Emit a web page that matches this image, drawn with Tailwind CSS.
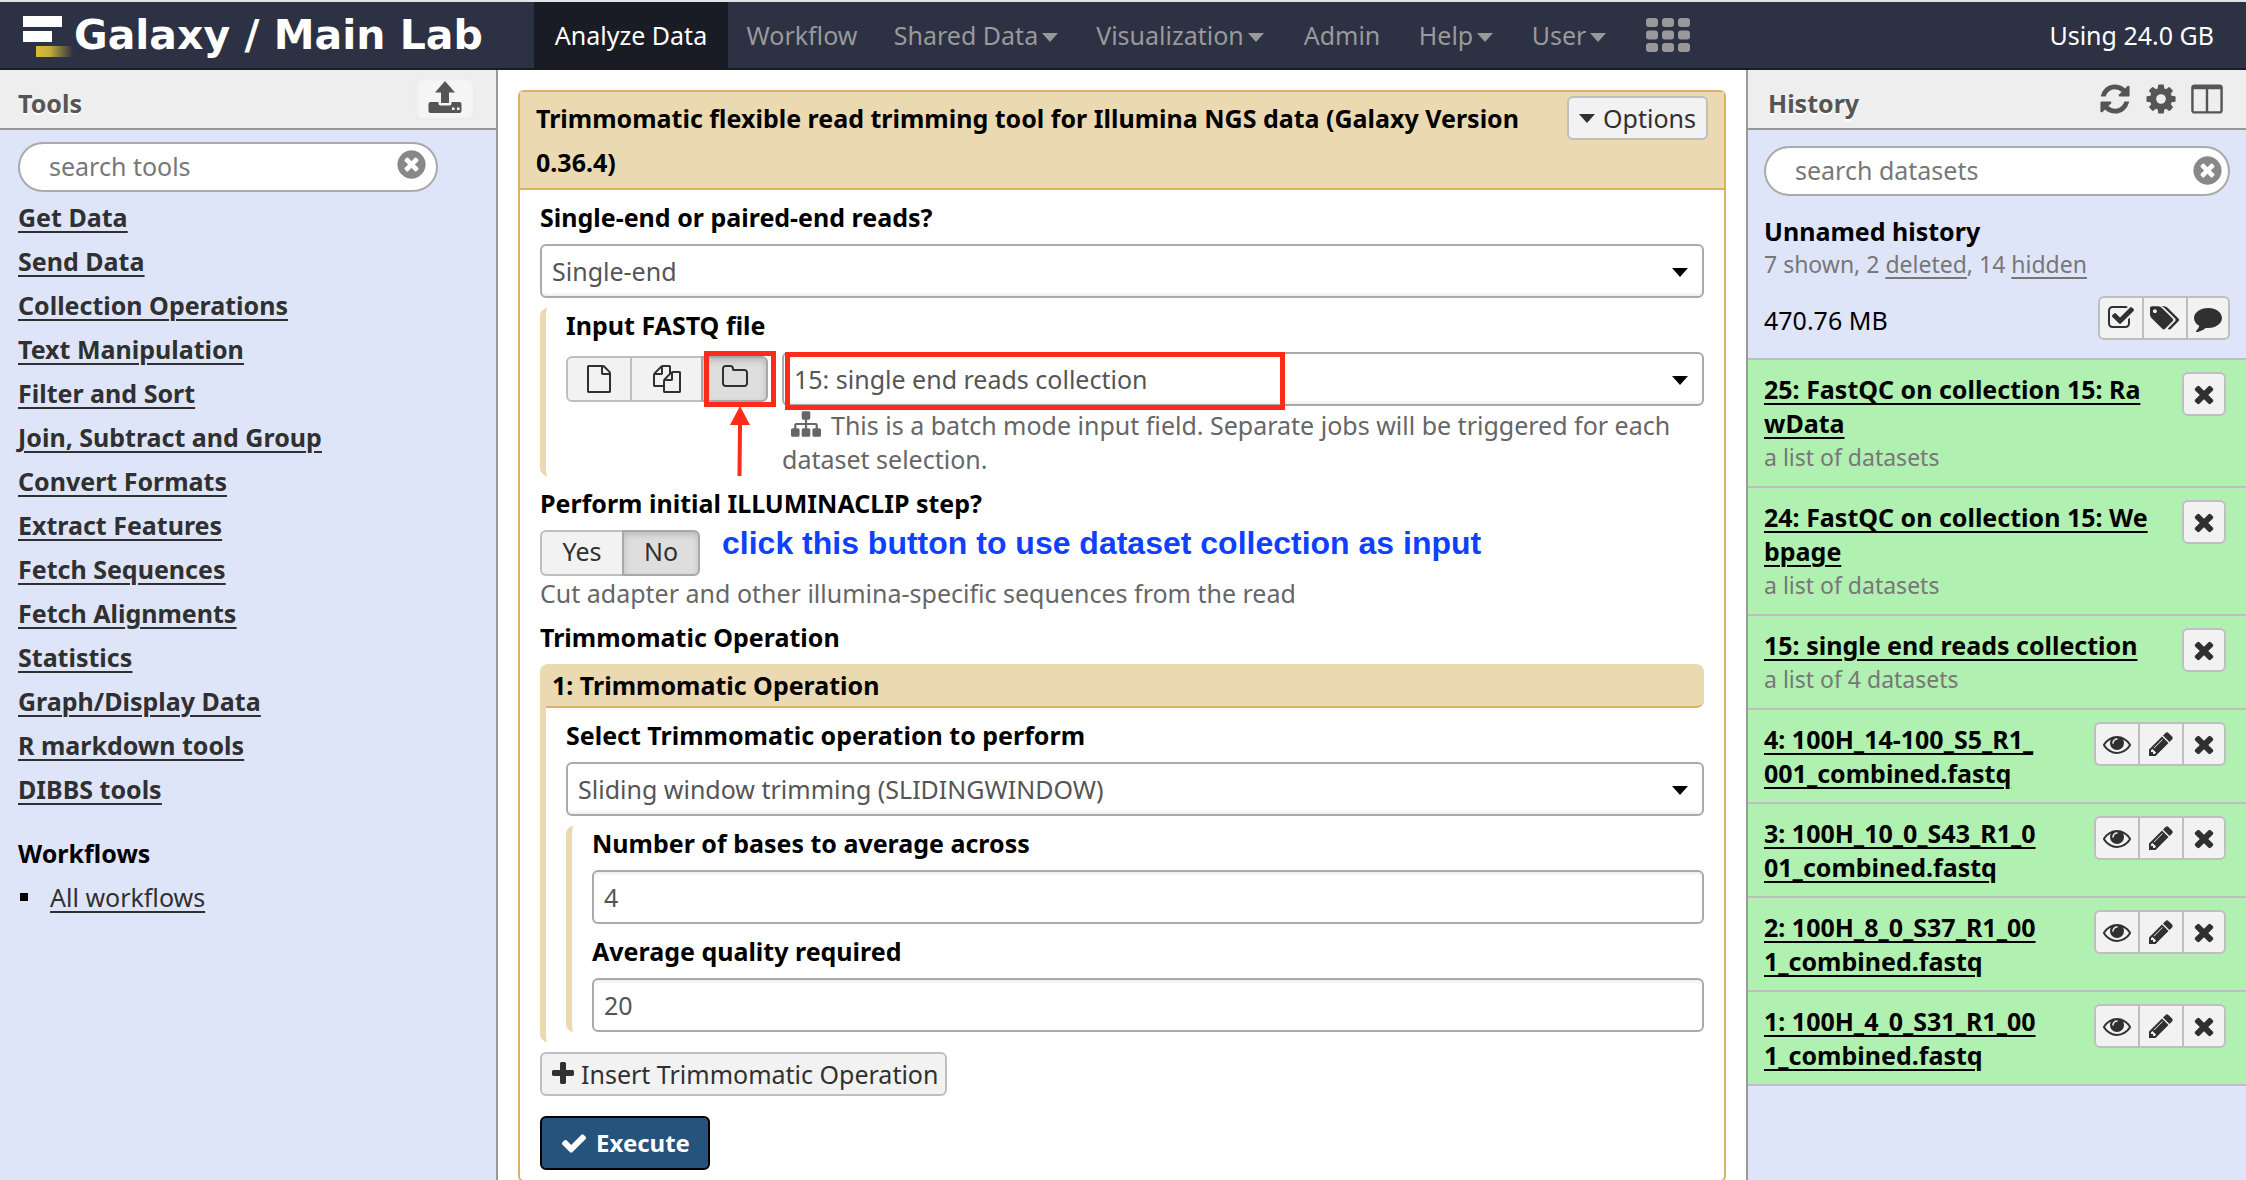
<!DOCTYPE html>
<html lang="en">
<head>
<meta charset="utf-8">
<meta name="viewport" content="width=device-width, initial-scale=1">
<title>Galaxy / Main Lab</title>
<script src="https://cdn.jsdelivr.net/npm/@tailwindcss/browser@4"></script>
</head>
<body class="flex h-screen flex-col overflow-hidden bg-white font-['Noto_Sans',sans-serif] text-[25px] leading-[34px] text-black">

<svg class="hidden" aria-hidden="true">
  <symbol id="i-times" viewBox="0 0 1792 1792"><path d="M1490 1322q0 40-28 68l-136 136q-28 28-68 28t-68-28l-294-294-294 294q-28 28-68 28t-68-28l-136-136q-28-28-28-68t28-68l294-294-294-294q-28-28-28-68t28-68l136-136q28-28 68-28t68 28l294 294 294-294q28-28 68-28t68 28l136 136q28 28 28 68t-28 68l-294 294 294 294q28 28 28 68z"/></symbol>
  <symbol id="i-clear" viewBox="0 0 1792 1792"><path d="M1277 1122q0-26-19-45l-181-181 181-181q19-19 19-45 0-27-19-46l-90-90q-19-19-46-19-26 0-45 19l-181 181-181-181q-19-19-45-19-27 0-46 19l-90 90q-19 19-19 46 0 26 19 45l181 181-181 181q-19 19-19 45 0 27 19 46l90 90q19 19 46 19 26 0 45-19l181-181 181 181q19 19 45 19 27 0 46-19l90-90q19-19 19-46zm387-226q0 209-103 385.500t-279.500 279.500-385.500 103-385.500-103-279.500-279.500-103-385.500 103-385.500 279.500-279.500 385.500-103 385.500 103 279.500 279.500 103 385.500z"/></symbol>
  <symbol id="i-pencil" viewBox="0 0 1792 1792"><path d="M491 1536l91-91-235-235-91 91v107h128v128h107zm523-928q0-22-22-22-10 0-17 7l-542 542q-7 7-7 17 0 22 22 22 10 0 17-7l542-542q7-7 7-17zm-54-192l416 416-832 832h-416v-416zm683 96q0 53-37 90l-166 166-416-416 166-165q36-38 90-38 53 0 91 38l235 234q37 39 37 91z"/></symbol>
  <symbol id="i-eye" viewBox="0 0 1792 1792"><path d="M1664 960q-152-236-381-353 61 104 61 225 0 185-131.500 316.500t-316.500 131.500-316.500-131.500-131.500-316.500q0-121 61-225-229 117-381 353 133 205 333.500 326.500t434.500 121.500 434.500-121.500 333.500-326.500zm-720-384q0-20-14-34t-34-14q-125 0-214.500 89.500t-89.500 214.500q0 20 14 34t34 14 34-14 14-34q0-86 61-147t147-61q20 0 34-14t14-34zm848 384q0 34-20 69-140 230-376.500 368.500t-499.500 138.500-499.500-139-376.500-368q-20-35-20-69t20-69q140-229 376.500-368t499.500-139 499.500 139 376.500 368q20 35 20 69z"/></symbol>
  <symbol id="i-plus" viewBox="0 0 1792 1792"><path d="M1600 736v192q0 40-28 68t-68 28h-416v416q0 40-28 68t-68 28h-192q-40 0-68-28t-28-68v-416h-416q-40 0-68-28t-28-68v-192q0-40 28-68t68-28h416v-416q0-40 28-68t68-28h192q40 0 68 28t28 68v416h416q40 0 68 28t28 68z"/></symbol>
  <symbol id="i-check" viewBox="0 0 1792 1792"><path d="M1671 566q0 40-28 68l-724 724-136 136q-28 28-68 28t-68-28l-136-136-362-362q-28-28-28-68t28-68l136-136q28-28 68-28t68 28l294 295 656-657q28-28 68-28t68 28l136 136q28 28 28 68z"/></symbol>
  <symbol id="i-cog" viewBox="0 0 1792 1792"><path d="M1152 896q0-106-75-181t-181-75-181 75-75 181 75 181 181 75 181-75 75-181zm512-109v222q0 12-8 23t-20 13l-185 28q-19 54-39 91 35 50 107 138 10 12 10 25t-9 23q-27 37-99 108t-94 71q-12 0-26-9l-138-108q-44 23-91 38-16 136-29 186-7 28-36 28h-222q-14 0-24.500-8.500t-11.500-21.500l-28-184q-49-16-90-37l-141 107q-10 9-25 9-14 0-25-11-126-114-165-168-7-10-7-23 0-12 8-23 15-21 51-66.500t54-70.500q-27-50-41-99l-183-27q-13-2-21-12.500t-8-23.500v-222q0-12 8-23t19-13l186-28q14-46 39-92-40-57-107-138-10-12-10-24 0-10 9-23 26-36 98.500-107.500t94.500-71.500q13 0 26 10l138 107q44-23 91-38 16-136 29-186 7-28 36-28h222q14 0 24.500 8.500t11.500 21.500l28 184q49 16 90 37l142-107q9-9 24-9 13 0 25 10 129 119 165 170 7 8 7 22 0 12-8 23-15 21-51 66.500t-54 70.500q26 50 41 98l183 28q13 2 21 12.500t8 23.500z"/></symbol>
  <symbol id="i-refresh" viewBox="0 0 1792 1792"><path d="M1639 1056q0 5-1 7-64 268-268 434.500t-478 166.500q-146 0-282.500-55t-243.500-157l-129 129q-19 19-45 19t-45-19-19-45v-448q0-26 19-45t45-19h448q26 0 45 19t19 45-19 45l-137 137q71 66 161 102t187 36q134 0 250-65t186-179q11-17 53-117 8-23 30-23h192q13 0 22.500 9.500t9.500 22.500zm25-800v448q0 26-19 45t-45 19h-448q-26 0-45-19t-19-45 19-45l138-138q-148-137-349-137-134 0-250 65t-186 179q-11 17-53 117-8 23-30 23h-199q-13 0-22.500-9.500t-9.500-22.500v-7q65-268 270-434.500t480-166.500q146 0 284 55.500t245 156.500l130-129q19-19 45-19t45 19 19 45z"/></symbol>
  <symbol id="i-columns" viewBox="0 0 1792 1792"><path d="M224 1536h608v-1152h-640v1120q0 13 9.500 22.500t22.500 9.500zm1376-32v-1120h-640v1152h608q13 0 22.500-9.500t9.500-22.500zm128-1216v1216q0 66-47 113t-113 47h-1344q-66 0-113-47t-47-113v-1216q0-66 47-113t113-47h1344q66 0 113 47t47 113z"/></symbol>
  <symbol id="i-folder" viewBox="0 0 1792 1792"><path d="M1600 1312v-704q0-40-28-68t-68-28h-704q-40 0-68-28t-28-68v-64q0-40-28-68t-68-28h-320q-40 0-68 28t-28 68v960q0 40 28 68t68 28h1216q40 0 68-28t28-68zm128-704v704q0 92-66 158t-158 66h-1216q-92 0-158-66t-66-158v-960q0-92 66-158t158-66h320q92 0 158 66t66 158v32h672q92 0 158 66t66 158z"/></symbol>
  <symbol id="i-file" viewBox="0 0 1792 1792"><path d="M1596 380q28 28 48 76t20 88v1152q0 40-28 68t-68 28h-1344q-40 0-68-28t-28-68v-1600q0-40 28-68t68-28h896q40 0 88 20t76 48zm-444-244v376h376q-10-29-22-41l-313-313q-12-12-41-22zm384 1528v-1024h-416q-40 0-68-28t-28-68v-416h-768v1536h1280z"/></symbol>
  <symbol id="i-files" viewBox="0 0 1792 1792"><path d="M1696 384q40 0 68 28t28 68v1216q0 40-28 68t-68 28h-960q-40 0-68-28t-28-68v-288h-544q-40 0-68-28t-28-68v-672q0-40 20-88t48-76l408-408q28-28 76-48t88-20h416q40 0 68 28t28 68v328q68-40 128-40h416zm-544 213l-299 299h299v-299zm-640-384l-299 299h299v-299zm196 647l316-316v-416h-384v416q0 40-28 68t-68 28h-416v640h512v-256q0-40 20-88t48-76zm956 804v-1152h-384v416q0 40-28 68t-68 28h-416v640h896z"/></symbol>
  <symbol id="i-sitemap" viewBox="0 0 1792 1792"><path d="M1792 1248v320q0 40-28 68t-68 28h-320q-40 0-68-28t-28-68v-320q0-40 28-68t68-28h96v-192h-512v192h96q40 0 68 28t28 68v320q0 40-28 68t-68 28h-320q-40 0-68-28t-28-68v-320q0-40 28-68t68-28h96v-192h-512v192h96q40 0 68 28t28 68v320q0 40-28 68t-68 28h-320q-40 0-68-28t-28-68v-320q0-40 28-68t68-28h96v-192q0-52 38-90t90-38h512v-192h-96q-40 0-68-28t-28-68v-320q0-40 28-68t68-28h320q40 0 68 28t28 68v320q0 40-28 68t-68 28h-96v192h512q52 0 90 38t38 90v192h96q40 0 68 28t28 68z"/></symbol>
  <symbol id="i-checkbox" viewBox="0 0 1792 1792"><path d="M1472 930v318q0 119-84.500 203.500t-203.500 84.500h-832q-119 0-203.500-84.500t-84.500-203.500v-832q0-119 84.500-203.500t203.500-84.500h832q63 0 117 25 15 7 18 23 3 17-9 29l-49 49q-10 10-23 10-3 0-9-2-23-6-45-6h-832q-66 0-113 47t-47 113v832q0 66 47 113t113 47h832q66 0 113-47t47-113v-254q0-13 9-22l64-64q10-10 23-10 6 0 12 3 20 8 20 29zm231-489l-814 814q-24 24-57 24t-57-24l-430-430q-24-24-24-57t24-57l110-110q24-24 57-24t57 24l263 263 647-647q24-24 57-24t57 24l110 110q24 24 24 57t-24 57z"/></symbol>
  <symbol id="i-tags" viewBox="128 0 1960 1792"><path d="M576 448q0-53-37.500-90.500t-90.500-37.500-90.500 37.500-37.500 90.500 37.500 90.500 90.500 37.500 90.500-37.500 37.500-90.500zm1067 576q0 53-37 90l-491 492q-39 37-91 37-53 0-90-37l-715-716q-38-37-64.500-101t-26.500-117v-416q0-52 38-90t90-38h416q53 0 117 26.500t102 64.500l715 714q37 39 37 91zm384 0q0 53-37 90l-491 492q-39 37-91 37-36 0-59-14t-53-45l470-470q37-37 37-90 0-52-37-91l-715-714q-38-38-102-64.500t-117-26.500h224q53 0 117 26.500t102 64.500l715 714q37 39 37 91z"/></symbol>
  <symbol id="i-comment" viewBox="0 0 1792 1792"><path d="M1792 896q0 174-120 321.500t-326 233-450 85.500q-70 0-145-8-198 175-460 242-49 14-114 22-17 2-30.500-9t-17.500-29v-1q-3-4-.5-12t2-10 4.500-9.500l6-9 7-8.500 8-9q7-8 31-34.500t34.500-38 31-39.500 32.500-51 27-59 26-76q-157-89-247.500-220t-90.500-281q0-130 71-248.500t191-204.500 286-136.500 348-50.500q244 0 450 85.500t326 233 120 321.500z"/></symbol>
  <symbol id="i-upload" viewBox="0 0 34 34"><path d="M17 1 27 12.500h-6V23h-8V12.500H7z"/><path fill-rule="evenodd" d="M2.500 22H10.500v1.500q0 2 2 2h9q2 0 2-2V22h8q2 0 2 2v7q0 2-2 2h-29q-2 0-2-2v-7q0-2 2-2zM24 27.500v2.600h2.600v-2.600zm5 0v2.600h2.600v-2.600z"/></symbol>
  <symbol id="i-caret" viewBox="0 0 16 9"><path d="M0 0h16L8 9z"/></symbol>
  <symbol id="i-grid" viewBox="0 0 44 34"><g><rect width="12" height="9" rx="3"/><rect x="16" width="12" height="9" rx="3"/><rect x="32" width="12" height="9" rx="3"/><rect y="12.500" width="12" height="9" rx="3"/><rect x="16" y="12.500" width="12" height="9" rx="3"/><rect x="32" y="12.500" width="12" height="9" rx="3"/><rect y="25" width="12" height="9" rx="3"/><rect x="16" y="25" width="12" height="9" rx="3"/><rect x="32" y="25" width="12" height="9" rx="3"/></g></symbol>
</svg>

<header class="flex h-[70px] shrink-0 items-stretch border-t-2 border-b-2 border-t-[#dfe4e6] border-b-[#191b25] bg-[#2c3143]">
  <a href="#" class="flex w-[534px] items-center pl-[22px] text-white">
    <svg class="mt-1 h-[44px] w-[52px]" viewBox="0 0 52 44" aria-hidden="true">
      <defs><linearGradient id="gold"><stop offset="0" stop-color="#d6bd35"/><stop offset=".35" stop-color="#c6b03a"/><stop offset="1" stop-color="#2c3143"/></linearGradient></defs>
      <rect x="1" y="1" width="39" height="11" fill="#fff"/><rect x="1" y="16" width="29" height="11" fill="#fff"/><rect x="14" y="31" width="37" height="11" fill="url(#gold)"/>
    </svg>
    <span class="whitespace-nowrap font-['DejaVu_Sans',sans-serif] text-[41px] font-bold leading-[60px]">Galaxy / Main Lab</span>
  </a>
  <nav class="flex items-stretch text-[#999]">
    <a href="#" class="flex w-[194px] items-center justify-center bg-[#191b25] text-white">Analyze Data</a>
    <a href="#" class="flex w-[148px] items-center justify-center">Workflow</a>
    <a href="#" class="flex w-[200px] items-center justify-center gap-1">Shared Data<svg class="mt-1 h-[9px] w-4 fill-current"><use href="#i-caret"/></svg></a>
    <a href="#" class="flex w-[208px] items-center justify-center gap-1">Visualization<svg class="mt-1 h-[9px] w-4 fill-current"><use href="#i-caret"/></svg></a>
    <a href="#" class="flex w-[116px] items-center justify-center">Admin</a>
    <a href="#" class="flex w-[112px] items-center justify-center gap-1">Help<svg class="mt-1 h-[9px] w-4 fill-current"><use href="#i-caret"/></svg></a>
    <a href="#" class="flex w-[114px] items-center justify-center gap-1">User<svg class="mt-1 h-[9px] w-4 fill-current"><use href="#i-caret"/></svg></a>
    <a href="#" class="flex items-center px-5" aria-label="Apps"><svg class="h-[34px] w-11 fill-current"><use href="#i-grid"/></svg></a>
  </nav>
  <span class="ml-auto flex items-center pr-8 text-white">Using 24.0 GB</span>
</header>

<div class="flex min-h-0 flex-1">
  <aside class="w-[498px] shrink-0 border-r-2 border-[#999] bg-[#dfe5f9]">
    <div class="flex h-[60px] items-center justify-between border-b-2 border-[#999] bg-[#eee] pl-[18px] pr-[21px]">
      <h2 class="pt-2 font-bold text-[#555] [text-shadow:0_2px_0_#fff]">Tools</h2>
      <button type="button" aria-label="Upload" class="flex h-[42px] w-[60px] items-center justify-center rounded-md bg-[#f5f5f5] inset-shadow-[0_0_4px_#ddd]"><svg class="mb-1 h-[34px] w-[34px] fill-[#555]"><use href="#i-upload"/></svg></button>
    </div>
    <div class="px-[18px]">
      <div class="relative mt-3 w-[420px]">
        <input type="text" aria-label="search tools" placeholder="search tools" class="block h-[50px] w-full rounded-full border-2 border-[#aaa] bg-white pb-[2px] pl-[29px] pr-12 placeholder:text-[#777]">
        <button type="button" aria-label="clear search" class="absolute right-[10px] top-[6px]"><svg class="block h-[33px] w-[33px] fill-[#888]"><use href="#i-clear"/></svg></button>
      </div>
      <nav class="mt-[3px] flex flex-col items-start font-bold leading-[44px] text-[#303030] underline decoration-2 underline-offset-4">
        <a href="#">Get Data</a>
        <a href="#">Send Data</a>
        <a href="#">Collection Operations</a>
        <a href="#">Text Manipulation</a>
        <a href="#">Filter and Sort</a>
        <a href="#">Join, Subtract and Group</a>
        <a href="#">Convert Formats</a>
        <a href="#">Extract Features</a>
        <a href="#">Fetch Sequences</a>
        <a href="#">Fetch Alignments</a>
        <a href="#">Statistics</a>
        <a href="#">Graph/Display Data</a>
        <a href="#">R markdown tools</a>
        <a href="#">DIBBS tools</a>
      </nav>
      <h3 class="mt-5 font-bold leading-[44px]">Workflows</h3>
      <ul class="leading-[44px]">
        <li class="flex items-center gap-[22px] pl-[2px]"><span class="size-2 bg-black"></span><a href="#" class="text-[#303030] underline decoration-2 underline-offset-4">All workflows</a></li>
      </ul>
    </div>
  </aside>

  <main class="min-w-0 flex-1 overflow-hidden px-5 pt-5">
    <form class="rounded-md border-2 border-[#d8b365]">
      <div class="flex items-start justify-between border-b-2 border-[#d8b365] bg-[#ebd9b2] px-4 py-1">
        <h1 class="max-w-[1000px] font-bold leading-[44px]">Trimmomatic flexible read trimming tool for Illumina NGS data (Galaxy Version 0.36.4)</h1>
        <button type="button" class="flex h-11 shrink-0 items-center gap-2 rounded-md border-2 border-[#bfbfbf] bg-[#f2f2f2] px-[10px] text-[#303030]"><svg class="h-[9px] w-4 fill-current"><use href="#i-caret"/></svg>Options</button>
      </div>

      <div class="flex flex-col gap-[10px] px-5 py-[10px]">
        <div>
          <label for="layout" class="mb-[10px] block font-bold">Single-end or paired-end reads?</label>
          <div class="relative">
            <select id="layout" class="block h-[54px] w-full appearance-none rounded-md border-2 border-[#aaa] bg-white px-[10px] text-[#555] inset-shadow-[0_-4px_3px_-2px_#eee]"><option>Single-end</option></select>
            <svg class="pointer-events-none absolute right-4 top-[24px] h-[9px] w-4"><use href="#i-caret"/></svg>
          </div>
        </div>

        <fieldset class="rounded-l-lg border-l-6 border-[#ebd9b2] pl-5">
          <label for="fastq" class="mb-[10px] block font-bold">Input FASTQ file</label>
          <div class="flex items-start gap-[14px]">
            <div class="mt-1 flex h-[46px] w-[202px]">
              <button type="button" aria-label="Single dataset" class="flex w-[66px] items-center justify-center rounded-l-md border-2 border-[#bfbfbf] bg-[#f2f2f2]"><svg class="h-[28px] w-[28px] fill-[#303030]"><use href="#i-file"/></svg></button>
              <button type="button" aria-label="Multiple datasets" class="flex w-[69px] items-center justify-center border-y-2 border-[#bfbfbf] bg-[#f2f2f2]"><svg class="h-[28px] w-[28px] fill-[#303030]"><use href="#i-files"/></svg></button>
              <div class="relative flex-1">
                <button type="button" aria-label="Dataset collection" class="flex h-full w-full items-center justify-center rounded-r-md border-2 border-[#a8a8a8] bg-[#dedede] inset-shadow-[0_3px_6px_#bbb]"><svg class="mb-1 h-[28px] w-[28px] fill-[#303030]"><use href="#i-folder"/></svg></button>
                <span class="absolute -right-2 -top-[5px] h-[56px] w-[72px] border-[5px] border-[#fe2b1b]"></span>
                <svg class="absolute left-[29px] top-[50px] h-[70px] w-5" viewBox="0 0 20 70" aria-hidden="true"><path d="M10 0 20 19H12L11.500 70H7.500L8 19H0z" fill="#fe2b1b"/></svg>
              </div>
            </div>
            <div class="min-w-0 flex-1">
              <div class="relative">
                <select id="fastq" class="block h-[54px] w-full appearance-none rounded-md border-2 border-[#aaa] bg-white px-[10px] text-[#555] inset-shadow-[0_-4px_3px_-2px_#eee]"><option>15: single end reads collection</option></select>
                <svg class="pointer-events-none absolute right-4 top-[24px] h-[9px] w-4"><use href="#i-caret"/></svg>
                <span class="pointer-events-none absolute left-[3px] top-0 h-[58px] w-[500px] border-[5px] border-[#fe2b1b]"></span>
              </div>
              <p class="mt-[2px] text-[#666]"><svg class="ml-[9px] mr-[10px] inline h-[30px] w-[30px] fill-current align-[-4px]"><use href="#i-sitemap"/></svg>This is a batch mode input field. Separate jobs will be triggered for each<br>dataset selection.</p>
            </div>
          </div>
        </fieldset>

        <div>
          <h3 class="mb-[10px] font-bold">Perform initial ILLUMINACLIP step?</h3>
          <div class="flex h-[46px] items-start">
            <button type="button" class="h-[46px] w-[82px] rounded-l-md border-2 border-r-0 border-[#bfbfbf] bg-[#f2f2f2] pb-1 text-[#303030]">Yes</button>
            <button type="button" class="h-[46px] w-[78px] rounded-r-md border-2 border-[#a8a8a8] bg-[#dedede] pb-1 text-[#303030] inset-shadow-[0_3px_6px_#bbb]">No</button>
            <p class="ml-[22px] whitespace-nowrap font-['Liberation_Sans',sans-serif] text-[32px] font-bold leading-[26px] text-[#1040ff]">click this button to use dataset collection as input</p>
          </div>
          <p class="text-[#666]">Cut adapter and other illumina-specific sequences from the read</p>
        </div>

        <h3 class="font-bold">Trimmomatic Operation</h3>

        <section class="rounded-lg border-l-6 border-[#ebd9b2] pb-[10px]">
          <h4 class="h-11 rounded-r-lg border-b-2 border-[#d8b365] bg-[#ebd9b2] pl-[6px] font-bold leading-[42px]">1: Trimmomatic Operation</h4>
          <div class="flex flex-col gap-[10px] pl-5 pt-[10px]">
            <div>
              <label for="operation" class="mb-[10px] block font-bold">Select Trimmomatic operation to perform</label>
              <div class="relative">
                <select id="operation" class="block h-[54px] w-full appearance-none rounded-md border-2 border-[#aaa] bg-white px-[10px] text-[#555] inset-shadow-[0_-4px_3px_-2px_#eee]"><option>Sliding window trimming (SLIDINGWINDOW)</option></select>
                <svg class="pointer-events-none absolute right-4 top-[24px] h-[9px] w-4"><use href="#i-caret"/></svg>
              </div>
            </div>
            <fieldset class="flex flex-col gap-[10px] rounded-l-lg border-l-6 border-[#ebd9b2] pl-5">
              <div>
                <label for="bases" class="mb-[10px] block font-bold">Number of bases to average across</label>
                <input id="bases" type="text" value="4" class="block h-[54px] w-full rounded-md border-2 border-[#aaa] bg-white px-[10px] text-[#555] inset-shadow-[0_4px_3px_-2px_#eee]">
              </div>
              <div>
                <label for="quality" class="mb-[10px] block font-bold">Average quality required</label>
                <input id="quality" type="text" value="20" class="block h-[54px] w-full rounded-md border-2 border-[#aaa] bg-white px-[10px] text-[#555] inset-shadow-[0_4px_3px_-2px_#eee]">
              </div>
            </fieldset>
          </div>
        </section>

        <button type="button" class="flex h-11 items-center gap-1 self-start rounded-md border-2 border-[#bfbfbf] bg-[#f2f2f2] px-[7px] text-[#303030]"><svg class="h-[28px] w-[28px] fill-current"><use href="#i-plus"/></svg>Insert Trimmomatic Operation</button>
        <button type="button" class="mt-[10px] flex h-[54px] w-[170px] items-center justify-center gap-2 self-start rounded-md border-2 border-black bg-[#25537b] text-[24px] font-bold text-white"><svg class="h-[28px] w-[28px] fill-current"><use href="#i-check"/></svg>Execute</button>
      </div>
    </form>
  </main>

  <aside class="w-[500px] shrink-0 border-l-2 border-[#999] bg-[#dfe5f9]">
    <div class="flex h-[60px] items-center justify-between border-b-2 border-[#999] bg-[#eee] pl-5 pr-[22px]">
      <h2 class="pt-2 font-bold text-[#555] [text-shadow:0_2px_0_#fff]">History</h2>
      <div class="flex items-center gap-3">
        <button type="button" aria-label="Refresh"><svg class="block h-[34px] w-[34px] fill-[#555]"><use href="#i-refresh"/></svg></button>
        <button type="button" aria-label="History options"><svg class="block h-[34px] w-[34px] fill-[#555]"><use href="#i-cog"/></svg></button>
        <button type="button" aria-label="View all histories"><svg class="block h-[34px] w-[34px] fill-[#555]"><use href="#i-columns"/></svg></button>
      </div>
    </div>
    <div class="px-4">
      <div class="relative mt-4">
        <input type="text" aria-label="search datasets" placeholder="search datasets" class="block h-[50px] w-full rounded-full border-2 border-[#aaa] bg-white pb-[2px] pl-[29px] pr-12 placeholder:text-[#777]">
        <button type="button" aria-label="clear search" class="absolute right-[6px] top-[8px]"><svg class="block h-[33px] w-[33px] fill-[#888]"><use href="#i-clear"/></svg></button>
      </div>
      <h3 class="mt-[18px] font-bold">Unnamed history</h3>
      <p class="text-[23px] leading-8 text-[#777]">7 shown, 2 <a href="#" class="underline decoration-2 underline-offset-4">deleted</a>, 14 <a href="#" class="underline decoration-2 underline-offset-4">hidden</a></p>
      <div class="mt-4 mb-[18px] flex items-center justify-between">
        <span class="pt-1">470.76 MB</span>
        <div class="flex h-11 divide-x-2 divide-[#bfbfbf] rounded-md border-2 border-[#bfbfbf] bg-[#f2f2f2]">
          <button type="button" aria-label="Select datasets" class="flex w-[44px] items-center justify-center"><svg class="h-[28px] w-[28px] fill-[#303030]"><use href="#i-checkbox"/></svg></button>
          <button type="button" aria-label="Tags" class="flex w-[44px] items-center justify-center"><svg class="h-[28px] w-[30px] fill-[#303030]"><use href="#i-tags"/></svg></button>
          <button type="button" aria-label="Annotation" class="flex w-[40px] items-center justify-center"><svg class="h-[28px] w-[28px] fill-[#303030]"><use href="#i-comment"/></svg></button>
        </div>
      </div>
    </div>

    <ul id="datasets" class="divide-y-2 divide-[#bfbfbf] border-y-2 border-[#bfbfbf] bg-[#b0f0b0]"></ul>
  </aside>
</div>

<script>
  const datasets = [
    { lines: ['25: FastQC on collection 15: Ra', 'wData'], note: 'a list of datasets' },
    { lines: ['24: FastQC on collection 15: We', 'bpage'], note: 'a list of datasets' },
    { lines: ['15: single end reads collection'], note: 'a list of 4 datasets' },
    { lines: ['4: 100H_14-100_S5_R1_', '001_combined.fastq'] },
    { lines: ['3: 100H_10_0_S43_R1_0', '01_combined.fastq'] },
    { lines: ['2: 100H_8_0_S37_R1_00', '1_combined.fastq'] },
    { lines: ['1: 100H_4_0_S31_R1_00', '1_combined.fastq'] },
  ];
  const button = (label, icon) => `<button type="button" aria-label="${label}" class="flex w-[44px] items-center justify-center last:w-[40px]"><svg class="h-[28px] w-[28px] fill-[#303030]"><use href="#${icon}"/></svg></button>`;
  document.getElementById('datasets').innerHTML = datasets.map(d => `
    <li class="flex items-start justify-between py-3 pl-4 pr-5">
      <div class="whitespace-nowrap">
        <a href="#" class="block font-bold underline decoration-2 underline-offset-4">${d.lines.join('<br>')}</a>
        ${d.note ? `<p class="text-[23px] text-[#777]">${d.note}</p>` : ''}
      </div>
      <div class="flex h-11 divide-x-2 divide-[#bfbfbf] rounded-md border-2 border-[#bfbfbf] bg-[#f2f2f2]">
        ${d.note ? '' : button('View data', 'i-eye') + button('Edit attributes', 'i-pencil')}${button('Delete', 'i-times')}
      </div>
    </li>`).join('');
</script>
</body>
</html>
